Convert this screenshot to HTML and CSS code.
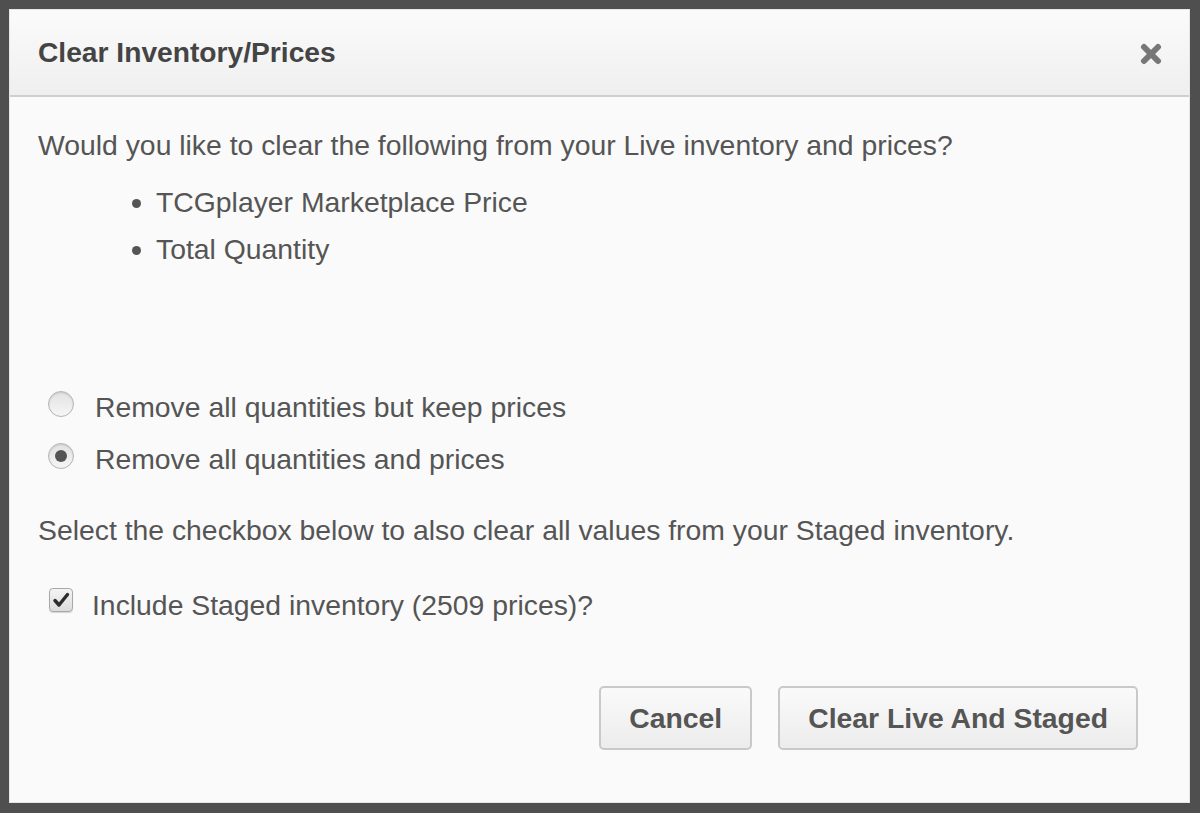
FILE: index.html
```html
<!DOCTYPE html>
<html lang="en">
<head>
  <meta charset="UTF-8" />
  <title>Clear Inventory/Prices</title>
  <link rel="stylesheet" href="styles.css">
</head>
<body>
  <div class="modal">
    <div class="modal-header">
      <h1>Clear Inventory/Prices</h1>
      <span class="close">
        <svg width="22" height="22" viewBox="0 0 22 22">
          <path d="M4 4 L18 18 M18 4 L4 18" stroke="#777" stroke-width="6" stroke-linecap="round" fill="none" />
        </svg>
      </span>
    </div>

    <div class="modal-body">
      <p class="intro">Would you like to clear the following from your Live inventory and prices?</p>
      <ul class="items">
        <li>TCGplayer Marketplace Price</li>
        <li>Total Quantity</li>
      </ul>

      <div class="options">
        <label class="option">
          <span class="radio"></span>
          Remove all quantities but keep prices
        </label>
        <label class="option">
          <span class="radio checked"></span>
          Remove all quantities and prices
        </label>
      </div>

      <p class="note">Select the checkbox below to also clear all values from your Staged inventory.</p>

      <label class="check-row">
        <span class="checkbox">
          <svg width="18" height="18" viewBox="0 0 18 18">
            <path d="M3 9.5 L7 14 L15.5 3.5" stroke="#2e2e2e" stroke-width="3.4" stroke-linecap="round" stroke-linejoin="round" fill="none" />
          </svg>
        </span>
        Include Staged inventory (2509 prices)?
      </label>

      <div class="actions">
        <button class="btn">Cancel</button>
        <button class="btn">Clear Live And Staged</button>
      </div>
    </div>
  </div>
</body>
</html>
```

FILE: styles.css
```css
* {
  box-sizing: border-box;
}

html, body {
  height: 100%;
}

body {
  margin: 0;
  padding: 9px 10px 10px 9px;
  background: #4f4f4f;
  font-family: 'Liberation Sans', Arial, sans-serif;
  color: #555;
}

.modal {
  height: 100%;
  background: #fafafa;
  border: 1px solid #e6e6e6;
  display: flex;
  flex-direction: column;
}

.modal-header {
  height: 87px;
  display: flex;
  align-items: center;
  justify-content: space-between;
  padding: 0 27px 0 28px;
  background: linear-gradient(#fbfbfb, #efefef);
  border-bottom: 2px solid #cfcfcf;
}

.modal-header h1 {
  margin: 0;
  font-size: 28.2px;
  font-weight: bold;
  color: #444;
}

.close {
  display: flex;
  margin-top: 2px;
}

.modal-body {
  flex: 1;
  padding: 28px 51px 0 28px;
  font-size: 28.35px;
}

.intro, .note {
  margin: 0;
  line-height: 40px;
}

.items {
  margin: 14px 0 0;
  padding-left: 118px;
  line-height: 47px;
}

.options {
  margin-top: 108px;
}

.option {
  display: flex;
  align-items: center;
  height: 52px;
  padding-left: 10px;
}

.radio {
  width: 26px;
  height: 26px;
  border-radius: 50%;
  border: 1px solid #b5b5b5;
  background: linear-gradient(#e2e2e2, #f6f6f6);
  box-shadow: inset 0 1px 2px rgba(0, 0, 0, 0.12);
  margin-right: 21px;
  margin-top: -6px;
  display: flex;
  align-items: center;
  justify-content: center;
}

.radio.checked::after {
  content: "";
  width: 12px;
  height: 12px;
  border-radius: 50%;
  background: #555;
}

.note {
  margin-top: 25px;
}

.check-row {
  display: flex;
  align-items: center;
  height: 40px;
  margin-top: 35px;
  padding-left: 11px;
}

.checkbox {
  width: 24px;
  height: 24px;
  border: 1px solid #a8a8a8;
  border-radius: 4px;
  background: linear-gradient(#f4f4f4, #dcdcdc);
  box-shadow: 0 1px 1px rgba(0, 0, 0, 0.15);
  margin-right: 19px;
  margin-top: -10px;
  display: flex;
  align-items: center;
  justify-content: center;
}

.actions {
  display: flex;
  justify-content: flex-end;
  gap: 26px;
  margin-top: 61px;
}

.btn {
  font-family: 'Liberation Sans', Arial, sans-serif;
  font-size: 28.35px;
  font-weight: bold;
  line-height: 32px;
  color: #555;
  padding: 14px 28px;
  background: linear-gradient(#fafafa, #ececec);
  border: 2px solid #c9c9c9;
  border-radius: 5px;
}
```
